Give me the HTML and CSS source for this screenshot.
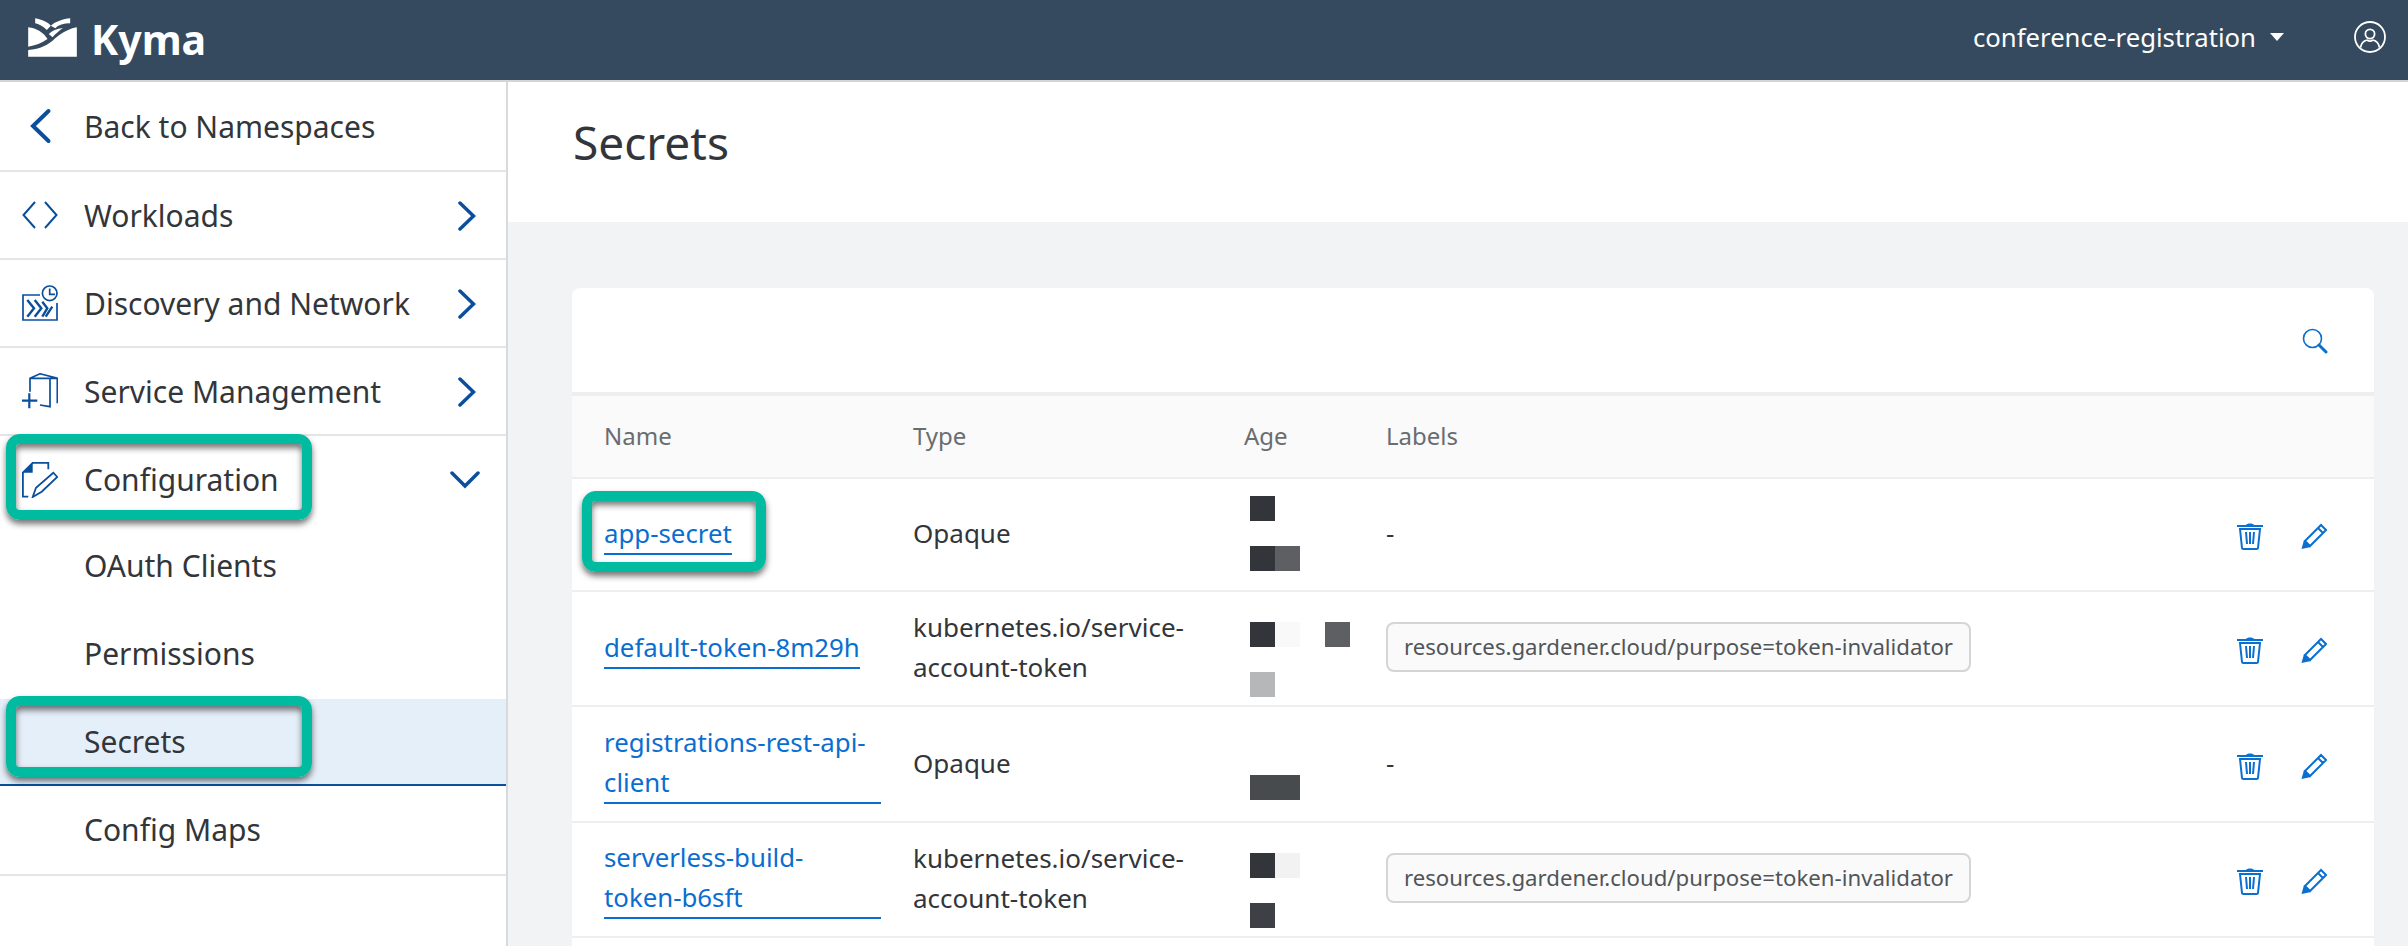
FILE: index.html
```html
<!DOCTYPE html>
<html lang="en">
<head>
  <meta charset="UTF-8" />
  <title>Secrets - Kyma</title>
  <link rel="stylesheet" href="styles.css">
</head>
<body>
  <header class="topbar">
    <div class="brand">
      <svg class="brand-logo" viewBox="24 24 146 117">
        <path fill="#fff" d="M24 52 C50 55 70 68 82 87 C65 100 45 106 24 110 Z"/>
        <path fill="#fff" d="M86 72 C95 62 110 56 128 54 C118 62 105 72 97 82 Z"/>
        <path fill="#fff" d="M24 140 V120 C60 118 85 105 105 85 C125 68 150 55 170 52 V140 Z"/>
        <path fill="#fff" d="M45 25 C65 28 85 38 92 47 L80 60 C70 50 55 42 45 40 Z"/>
        <path fill="#fff" d="M150 25 V40 C130 40 115 45 105 55 L92 47 C105 35 130 27 150 25 Z"/>
      </svg>
      <span class="brand-name">Kyma</span>
    </div>
    <div class="topbar-right">
      <span class="ns-name">conference-registration</span>
      <span class="caret"></span>
      <svg class="user-icon" viewBox="0 0 32 32" fill="none" stroke="#fff" stroke-width="1.8">
        <circle cx="16" cy="16" r="15"/>
        <circle cx="16" cy="13" r="4.6"/>
        <path d="M6.5 26.5 C7.5 21 11 19.5 13 19 M25.5 26.5 C24.5 21 21 19.5 19 19 M13 19 C15 20.4 17 20.4 19 19"/>
      </svg>
    </div>
  </header>

  <div class="layout">
    <nav class="sidebar">
      <a class="nav-item nav-back">
        <svg class="nav-icon" viewBox="0 0 36 36" fill="none" stroke="#0a4f9c" stroke-width="4" stroke-linecap="round"><path d="M26.500 3 L11 18 L26.500 33"/></svg>
        <span>Back to Namespaces</span>
      </a>
      <a class="nav-item">
        <svg class="nav-icon" viewBox="0 0 36 36" fill="none" stroke="#0a4f9c" stroke-width="2"><path d="M13 5 L1.500 18 L13 31 M23 5 L34.500 18 L23 31"/></svg>
        <span>Workloads</span>
        <svg class="nav-arrow" viewBox="0 0 18 30" fill="none" stroke="#0a4f9c" stroke-width="3.500" stroke-linecap="round"><path d="M2 2 L15.500 15 L2 28"/></svg>
      </a>
      <a class="nav-item">
        <svg class="nav-icon" viewBox="0 0 36 36" fill="none" stroke="#0a4f9c" stroke-width="1.700">
          <path d="M18 10 H1 V35 H35 V18"/>
          <circle cx="27.700" cy="8.300" r="7.300"/>
          <path d="M27.700 3.500 V9.300 H33"/>
          <path stroke-width="2.400" d="M5.300 15 L12 23.300 L5.300 31.700 M12.700 15 L19.300 23.300 L12.700 31.700 M20.300 16.700 L25.300 23.300 L20.300 31.700 M30.300 21.700 L23.700 31.700"/>
        </svg>
        <span>Discovery and Network</span>
        <svg class="nav-arrow" viewBox="0 0 18 30" fill="none" stroke="#0a4f9c" stroke-width="3.500" stroke-linecap="round"><path d="M2 2 L15.500 15 L2 28"/></svg>
      </a>
      <a class="nav-item">
        <svg class="nav-icon" viewBox="0 0 36 36" fill="none" stroke="#0a4f9c" stroke-width="1.700">
          <path d="M8 18.700 V5.300 L18 0.800 L35.300 5.300 V30.300 M8 5.300 H28 V33.700 L18 32 M28 5.300 L35.300 5.300"/>
          <path stroke-width="2.200" d="M0 27.700 H15.300 M7.300 20.300 V35.300"/>
        </svg>
        <span>Service Management</span>
        <svg class="nav-arrow" viewBox="0 0 18 30" fill="none" stroke="#0a4f9c" stroke-width="3.500" stroke-linecap="round"><path d="M2 2 L15.500 15 L2 28"/></svg>
      </a>
      <a class="nav-item nav-open">
        <svg class="nav-icon" viewBox="0 0 36 36" fill="none" stroke="#0a4f9c" stroke-width="1.800">
          <path d="M26.300 7.300 V0.900 H10.700 L0.900 10.700 V34.700 H6.300"/>
          <path fill="#0a4f9c" stroke="none" d="M10.700 0 V10.700 H0 Z"/>
          <path d="M10.700 35 L14 25.700 L31.300 10.700 L35.300 15 L19.700 29.700 Z"/>
        </svg>
        <span>Configuration</span>
        <svg class="nav-arrow nav-arrow-down" viewBox="0 0 30 18" fill="none" stroke="#0a4f9c" stroke-width="3.500" stroke-linecap="round"><path d="M2 2 L15 15 L28 2"/></svg>
        <span class="callout callout-config"></span>
      </a>
      <div class="nav-sub">
        <a class="nav-item nav-child">OAuth Clients</a>
        <a class="nav-item nav-child">Permissions</a>
        <a class="nav-item nav-child is-active">Secrets<span class="callout callout-secrets"></span></a>
        <a class="nav-item nav-child">Config Maps</a>
      </div>
    </nav>

    <main class="content">
      <div class="page-head">
        <h1>Secrets</h1>
      </div>
      <section class="panel">
        <div class="panel-tools">
          <svg class="search-icon" viewBox="0 0 26 26" fill="none" stroke="#0b6fd0">
            <circle cx="10.500" cy="10.500" r="9" stroke-width="1.600"/>
            <path d="M17 17 L24 24" stroke-width="3" stroke-linecap="round"/>
          </svg>
        </div>
        <table class="secrets">
          <colgroup>
            <col class="col-name"><col class="col-type"><col class="col-age"><col class="col-labels"><col>
          </colgroup>
          <thead>
            <tr><th>Name</th><th>Type</th><th>Age</th><th>Labels</th><th></th></tr>
          </thead>
          <tbody>
            <tr class="row-1">
              <td class="name-cell"><a class="link">app-secret</a><span class="callout callout-name"></span></td>
              <td>Opaque</td>
              <td><div class="mosaic">
                <i class="c1"></i><i></i><i></i><i></i>
                <i class="gap"></i>
                <i class="c1"></i><i class="c2"></i><i></i><i></i>
              </div></td>
              <td>-</td>
              <td class="actions"><svg class="act" viewBox="0 0 26 28"><use href="#trash"/></svg><svg class="act" viewBox="0 0 26 28"><use href="#pencil"/></svg></td>
            </tr>
            <tr class="row-2">
              <td><a class="link">default-token-8m29h</a></td>
              <td>kubernetes.io/service-account-token</td>
              <td><div class="mosaic mosaic-low">
                <i class="c1"></i><i class="c5"></i><i></i><i class="c2"></i>
                <i class="gap"></i>
                <i class="c3"></i><i></i><i></i><i></i>
              </div></td>
              <td><span class="tag">resources.gardener.cloud/purpose=token-invalidator</span></td>
              <td class="actions"><svg class="act" viewBox="0 0 26 28"><use href="#trash"/></svg><svg class="act" viewBox="0 0 26 28"><use href="#pencil"/></svg></td>
            </tr>
            <tr class="row-3">
              <td><a class="link">registrations-rest-api-client</a></td>
              <td>Opaque</td>
              <td><div class="mosaic">
                <i></i><i></i><i></i><i></i>
                <i class="gap"></i>
                <i class="c4"></i><i class="c4"></i><i></i><i></i>
              </div></td>
              <td>-</td>
              <td class="actions"><svg class="act" viewBox="0 0 26 28"><use href="#trash"/></svg><svg class="act" viewBox="0 0 26 28"><use href="#pencil"/></svg></td>
            </tr>
            <tr class="row-2">
              <td><a class="link link-wide">serverless-build-<br>token-b6sft</a></td>
              <td>kubernetes.io/service-account-token</td>
              <td><div class="mosaic mosaic-low">
                <i class="c1"></i><i class="c6"></i><i></i><i></i>
                <i class="gap"></i>
                <i class="c7"></i><i></i><i></i><i></i>
              </div></td>
              <td><span class="tag">resources.gardener.cloud/purpose=token-invalidator</span></td>
              <td class="actions"><svg class="act" viewBox="0 0 26 28"><use href="#trash"/></svg><svg class="act" viewBox="0 0 26 28"><use href="#pencil"/></svg></td>
            </tr>
            <tr class="row-last"><td colspan="5"></td></tr>
          </tbody>
        </table>
      </section>
    </main>
  </div>

  <svg class="sprite" width="0" height="0">
    <symbol id="trash" viewBox="0 0 26 28">
      <path fill="#0b6fd0" d="M0 3 H9 C10 1 16 1 17 3 H26 V5 H0 Z"/>
      <path fill="none" stroke="#0b6fd0" stroke-width="2" d="M3 7 H23 L21 26 C21 27 20 27 19.500 27 H6.500 C6 27 5 27 5 26 Z"/>
      <path fill="none" stroke="#0b6fd0" stroke-width="2" d="M9 10 L10 22 M13 10 V22 M17 10 L16 22"/>
    </symbol>
    <symbol id="pencil" viewBox="0 0 26 28">
      <path fill="none" stroke="#0b6fd0" stroke-width="2" d="M4 19 L20 3 L25 8 L9 24 Z M17 6 L22 11"/>
      <path fill="#0b6fd0" d="M0.500 27 L3 18 L10 25 Z"/>
    </symbol>
  </svg>
</body>
</html>
```

FILE: styles.css
```css
* {
  box-sizing: border-box;
}
html, body {
  height: 100%;
}
body {
  margin: 0;
  height: 946px;
  overflow: hidden;
  font-family: "Noto Sans", "Open Sans", sans-serif;
  color: #32363a;
  background: #fff;
  display: flex;
  flex-direction: column;
}
.sprite {
  position: absolute;
}

/* top bar */
.topbar {
  flex: 0 0 82px;
  background: #354a5f;
  border-bottom: 2px solid #d4d5d6;
  display: flex;
  align-items: center;
  justify-content: space-between;
  padding: 0 22px 6px 28px;
  color: #fff;
}
.brand {
  display: flex;
  align-items: center;
  gap: 14px;
}
.brand-logo {
  width: 49px;
  height: 39px;
}
.brand-name {
  font-size: 41px;
  font-weight: 700;
  line-height: 1;
  margin-top: 4px;
}
.topbar-right {
  display: flex;
  align-items: center;
}
.ns-name {
  font-size: 25.700px;
}
.caret {
  width: 0;
  height: 0;
  border-left: 7px solid transparent;
  border-right: 7px solid transparent;
  border-top: 8px solid #fff;
  margin-left: 14px;
}
.user-icon {
  width: 32px;
  height: 32px;
  margin-left: 70px;
}

/* sidebar */
.layout {
  flex: 1;
  display: flex;
  min-height: 0;
}
.sidebar {
  flex: 0 0 508px;
  border-right: 2px solid #d9dadb;
  background: #fff;
}
.nav-item {
  position: relative;
  height: 88px;
  display: flex;
  align-items: center;
  padding-left: 22px;
  font-size: 30px;
  border-bottom: 2px solid #e5e5e5;
}
.nav-back {
  height: 90px;
}
.nav-open {
  height: 87px;
  border-bottom: 0;
}
.nav-icon {
  flex: 0 0 36px;
  width: 36px;
  height: 36px;
  margin-right: 26px;
}
.nav-arrow {
  position: absolute;
  right: 30px;
  top: 29px;
  width: 18px;
  height: 30px;
}
.nav-arrow-down {
  right: 26px;
  top: 35px;
  width: 30px;
  height: 18px;
}
.nav-sub {
  border-bottom: 2px solid #e5e5e5;
}
.nav-child {
  height: 87.800px;
  padding-left: 84px;
  border-bottom: 2px solid transparent;
}
.is-active {
  background: #e5eff9;
  border-bottom: 2px solid #0a4f9c;
}

/* teal annotation boxes */
.callout {
  position: absolute;
  border: 10px solid #00bba0;
  border-radius: 14px;
  box-shadow: 0 4px 6px rgba(0, 0, 0, 0.55), inset 0 4px 6px rgba(0, 0, 0, 0.55);
  pointer-events: none;
}
.callout-config {
  left: 6px;
  top: -2px;
  width: 306px;
  height: 86px;
}
.callout-secrets {
  left: 6px;
  top: -3px;
  width: 306px;
  height: 81px;
}
.callout-name {
  left: 10px;
  top: 12px;
  width: 184px;
  height: 81px;
}

/* main */
.content {
  flex: 1;
  background: #f2f3f4;
  min-width: 0;
}
.page-head {
  height: 140px;
  background: #fff;
  padding: 0 0 20px 65px;
  display: flex;
  align-items: center;
}
.page-head h1 {
  margin: 0;
  font-size: 46px;
  font-weight: 400;
}
.panel {
  margin: 66px 34px 0 64px;
  background: #fff;
  border-radius: 8px 8px 0 0;
}
.panel-tools {
  height: 104px;
  display: flex;
  align-items: center;
  justify-content: flex-end;
  padding-right: 46px;
  padding-top: 1px;
}
.search-icon {
  width: 26px;
  height: 26px;
}
.secrets {
  width: 100%;
  border-collapse: collapse;
  table-layout: fixed;
  font-size: 26px;
}
.col-name { width: 309px; }
.col-type { width: 331px; }
.col-age { width: 142px; }
.col-labels { width: 640px; }
.secrets thead tr {
  background: #fafafa;
  border-top: 4px solid #eeeeee;
  border-bottom: 2px solid #eeeeee;
}
.secrets th {
  height: 84px;
  text-align: left;
  font-size: 24px;
  font-weight: 400;
  color: #6a6d70;
  padding: 0 0 2px 32px;
}
.secrets td {
  padding: 0 0 3px 32px;
  line-height: 40px;
  vertical-align: middle;
}
.secrets tbody tr {
  border-bottom: 2px solid #eeeeee;
}
.row-1 td { height: 113px; }
.row-2 td { height: 115px; }
.row-3 td { height: 116px; }
.secrets .row-last {
  border-bottom: 0;
}
.row-last td { height: 20px; }
.name-cell {
  position: relative;
}
.link {
  display: inline-block;
  font-size: 25.800px;
  color: #0a6ed1;
  border-bottom: 2px solid #0a6ed1;
  vertical-align: middle;
}
.link-wide {
  width: 100%;
}
.mosaic {
  display: grid;
  grid-template-columns: repeat(4, 25px);
  grid-auto-rows: 25px;
  margin-left: 6px;
}
.mosaic-low {
  margin-top: 24px;
}
.mosaic .gap {
  grid-column: 1 / -1;
  height: 26px;
}
.c1 { background: #32353a; }
.c2 { background: #5d5f63; }
.c3 { background: #b6b7b9; }
.c4 { background: #484b4e; }
.c5 { background: #f9f9f9; }
.c6 { background: #f2f2f2; }
.c7 { background: #3d4044; }
.tag {
  display: inline-block;
  height: 50px;
  line-height: 46px;
  padding: 0 16px;
  font-size: 22.200px;
  color: #515559;
  background: #fafafa;
  border: 2px solid #d5d5d5;
  border-radius: 8px;
  white-space: nowrap;
  vertical-align: middle;
}
.actions {
  text-align: right;
  white-space: nowrap;
}
.secrets .actions {
  padding-right: 47px;
}
.act {
  width: 26px;
  height: 28px;
  margin-left: 38px;
  vertical-align: middle;
}
```
